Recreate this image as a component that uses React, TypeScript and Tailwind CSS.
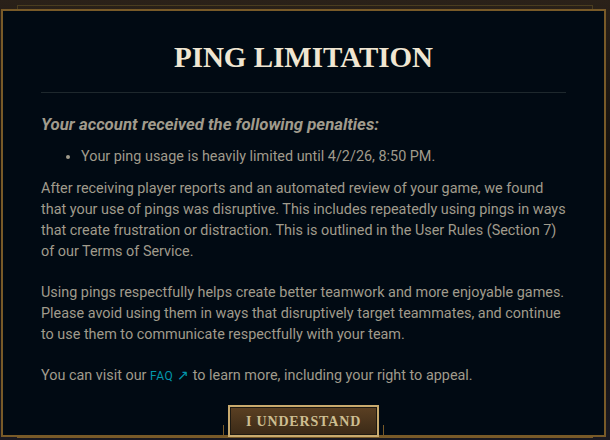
import React from "react";

const serif = { fontFamily: '"Liberation Serif", "DejaVu Serif", serif' };
const sans = { fontFamily: 'Roboto, "Liberation Sans", sans-serif' };

const PenaltyModal = () => {
  const handleClose = () => {
    // nothing to do here, the dialog is static
  };

  return (
    <div className="w-[610px] h-[440px] overflow-hidden bg-gradient-to-b from-[#2a2119] via-[#0d0c0b] to-[#1b1a22] pt-[5px]">
      {/* outer frame line */}
      <div className="mx-[17px] h-[4px] border-t border-x border-[#4a3d20]" />
      <div className="mx-[1px] w-[605px] h-[428px] border-2 border-[#785a28] bg-[#010a13] flex flex-col items-center">
        <h1
          className="mt-[31px] text-[29px] leading-[30px] font-bold text-[#f0e6d2]"
          style={serif}
        >
          PING LIMITATION
        </h1>
        <div className="mt-[20px] w-[525px] h-px bg-[#1e282d]" />

        <div className="w-[525px] text-[14.4px] leading-[21px] text-[#a09b8c]" style={sans}>
          <h2 className="mt-[20px] text-[16.8px] leading-[22px] font-bold italic text-[#a09b8c]">
            Your account received the following penalties:
          </h2>
          <ul className="mt-[11px] ml-[26px] list-disc pl-[14px]">
            <li>Your ping usage is heavily limited until 4/2/26, 8:50 PM.</li>
          </ul>
          <p className="mt-[11px]">
            After receiving player reports and an automated review of your game, we found that your use of pings was
            disruptive. This includes repeatedly using pings in ways that create frustration or distraction. This is
            outlined in the User Rules (Section 7) of our Terms of Service.
          </p>
          <p className="mt-[20px]">
            Using pings respectfully helps create better teamwork and more enjoyable games. Please avoid using them in
            ways that disruptively target teammates, and continue to use them to communicate respectfully with your
            team.
          </p>
          <p className="mt-[20px]">
            You can visit our{" "}
            <a className="text-[12px] text-[#0397ab] tracking-[0.04em]">
              FAQ <span className="text-[14px]">↗</span>
            </a>{" "}
            to learn more, including your right to appeal.
          </p>
        </div>

        <div className="mt-auto -mb-[2px] flex items-end">
          <div className="w-px h-[12px] bg-[#785a28]" />
          <button
            onClick={handleClose}
            className="mx-[4px] w-[151px] h-[32px] border-2 border-[#c8aa6e] bg-gradient-to-b from-[#5b4023] to-[#3b2a17] shadow-[inset_0_0_0_1px_#1e1a12] text-[14px] font-bold tracking-[0.06em] text-[#cdbe91]"
            style={serif}
          >
            I UNDERSTAND
          </button>
          <div className="w-px h-[12px] bg-[#785a28]" />
        </div>
      </div>
      <div className="mx-[17px] h-px bg-[#785a28]" />
    </div>
  );
};

export default function App() {
  return <PenaltyModal />;
}
